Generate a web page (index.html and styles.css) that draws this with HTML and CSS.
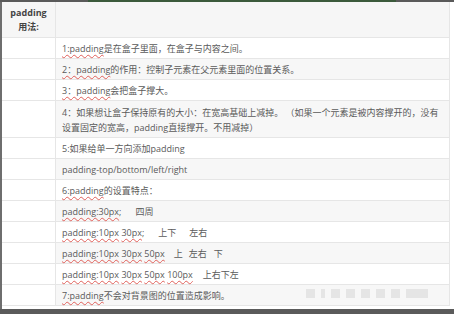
FILE: index.html
```html
<!DOCTYPE html>
<html lang="zh">
<head>
<meta charset="utf-8">
<link rel="stylesheet" href="styles.css">
</head>
<body>
<div class="frame">
  <div class="topline"><span class="seg-a"></span><span class="seg-b"></span><span class="seg-c"></span></div>
  <div class="inner">
    <table class="tbl">
      <tr class="head">
        <th class="c1">padding<br>用法:</th>
        <th class="c2"></th>
      </tr>
      <tr><td class="c1"></td><td class="c2"><u>1:padding</u>是在盒子里面，在盒子与内容之间。</td></tr>
      <tr class="alt"><td class="c1"></td><td class="c2"><u>2：padding</u>的作用：控制子元素在父元素里面的位置关系。</td></tr>
      <tr><td class="c1"></td><td class="c2"><u>3：padding</u>会把盒子撑大。</td></tr>
      <tr class="alt tall"><td class="c1"></td><td class="c2">4：如果想让盒子保持原有的大小：在宽高基础上减掉。 （如果一个元素是被内容撑开的，没有<br>设置固定的宽高，padding直接撑开。不用减掉）</td></tr>
      <tr><td class="c1"></td><td class="c2">5:如果给单一方向添加padding</td></tr>
      <tr class="alt"><td class="c1"></td><td class="c2">padding-top/bottom/left/right</td></tr>
      <tr><td class="c1"></td><td class="c2"><u>6:padding</u>的设置特点：</td></tr>
      <tr class="alt"><td class="c1"></td><td class="c2"><u>padding:30px</u>;<span class="g1">四周</span></td></tr>
      <tr><td class="c1"></td><td class="c2"><u>padding:10px</u> <u>30px</u>;<span class="g1">上下</span><span class="g2">左右</span></td></tr>
      <tr class="alt"><td class="c1"></td><td class="c2"><u>padding:10px</u> <u>30px</u> <u>50px</u><span class="g3">上</span><span class="g4">左右</span><span class="g5">下</span></td></tr>
      <tr><td class="c1"></td><td class="c2"><u>padding:10px</u> <u>30px</u> <u>50px</u> <u>100px</u><span class="g6">上右下左</span></td></tr>
      <tr class="alt"><td class="c1"></td><td class="c2"><u>7:padding</u>不会对背景图的位置造成影响。</td></tr>
    </table>
    <div class="wm"><i></i><i class="s"></i><i></i><i></i><i></i><i></i><i></i><i class="w"></i></div>
  </div>
  <div class="bottomline"></div>
</div>
</body>
</html>
```
FILE: styles.css
```css
html, body {
  margin: 0;
  padding: 0;
  background: #ffffff;
}
.frame {
  width: 454px;
  height: 314px;
  display: flex;
  flex-direction: column;
  overflow: hidden;
}
.topline {
  display: flex;
  height: 2px;
  flex: none;
}
.seg-a { width: 88px; background: #5a5a5a; }
.seg-b { width: 308px; background: #3c5a3c; }
.seg-c { flex: 1; background: #5a5a5a; }
.inner {
  position: relative;
  flex: 1;
  border-left: 2px solid #6e6e6e;
}
.bottomline {
  height: 5px;
  flex: none;
  background: #5b5b5b;
}
.tbl {
  border-collapse: collapse;
  width: 448px;
  font-family: "Open Sans", "Noto Sans CJK SC", sans-serif;
  font-size: 9px;
  color: #5a5a5a;
  table-layout: fixed;
}
.tbl td, .tbl th {
  border: 1px solid #e6e6e6;
  padding: 3px 6px 2px 6px;
  line-height: 15px;
  text-align: left;
  vertical-align: middle;
  white-space: nowrap;
}
.tbl th.c1 { width: 49px; }
.tbl tr:first-child th { border-top: none; }
.tbl td:first-child, .tbl th:first-child { border-left: none; }
.head th {
  background: #f6f6f6;
  height: 31px;
  padding-top: 2px;
  padding-bottom: 2px;
  line-height: 14px;
}
.head th.c1 {
  text-align: center;
  font-weight: 700;
  color: #444;
  padding-left: 2px;
  padding-right: 2px;
}
.tall td { padding-top: 4px; padding-bottom: 2px; }
.alt .c2 { background: #f7f7f7; }
u {
  text-decoration: underline wavy #e0605a;
  text-decoration-thickness: 1px;
  text-underline-offset: 2px;
}
.g1 { margin-left: 14px; }
.g2 { margin-left: 13px; }
.g3 { margin-left: 9px; }
.g4 { margin-left: 6px; }
.g5 { margin-left: 7px; }
.g6 { margin-left: 10px; }
.wm {
  position: absolute;
  left: 304px;
  top: 287px;
  display: flex;
  gap: 6px;
  opacity: 0.55;
}
.wm i {
  display: block;
  width: 9px;
  height: 9px;
  background: #d8d8d8;
}
.wm i.s { width: 4px; }
.wm i.w { width: 22px; }
```
